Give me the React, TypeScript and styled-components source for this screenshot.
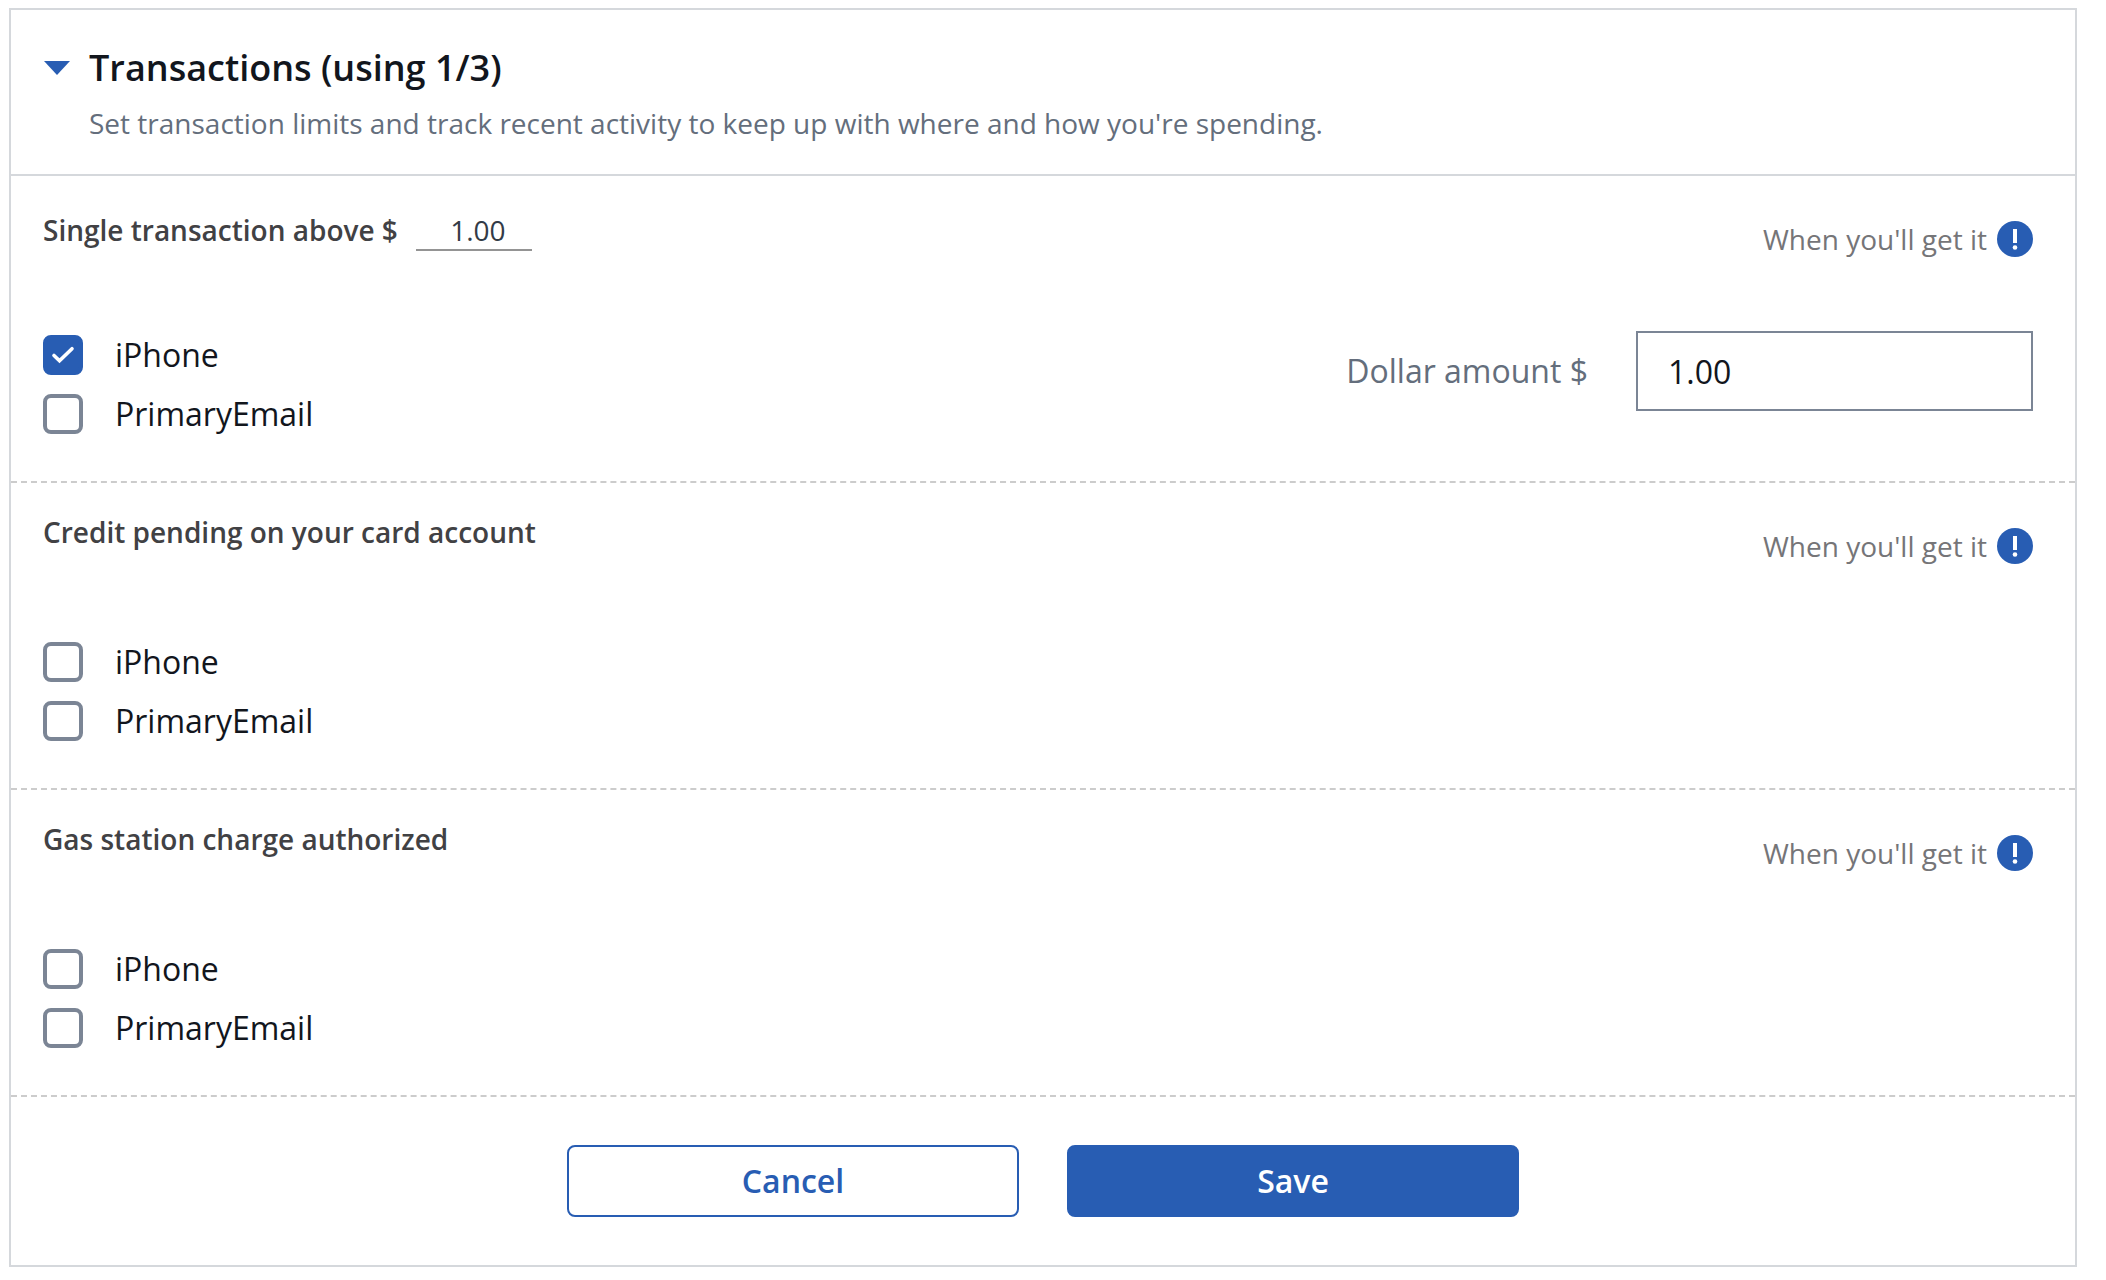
import React, { useId, useState } from "react";
import styled, { createGlobalStyle } from "styled-components";

const color = {
  blue: "#285db3",
  ink: "#12161d",
  slate: "#646e7c",
  control: "#7b8595",
  charcoal: "#414144",
  grey: "#757578",
  line: "#d5d8dc",
  dash: "#cccccc",
};

const GlobalStyle = createGlobalStyle`
  *, *::before, *::after { box-sizing: border-box; }
  body {
    margin: 0;
    background: #fff;
    color: ${color.ink};
    font-family: "Open Sans", "Noto Sans", sans-serif;
    font-size: 28px;
    line-height: 38px;
  }
  button, input { font: inherit; color: inherit; }
`;

const Panel = styled.form`
  margin: 8px 29px 13px 9px;
  border: 2px solid ${color.line};
  background: #fff;
`;

const PanelHeader = styled.header`
  padding: 34px 42px 32px 32px;
  border-bottom: 2px solid ${color.line};
`;

const Title = styled.h2`
  margin: 0 0 12px;
  font-size: 36px;
  line-height: 48px;
  font-weight: 600;
`;

const Toggle = styled.button`
  display: flex;
  align-items: center;
  gap: 18px;
  padding: 0;
  border: 0;
  background: none;
  cursor: pointer;
`;

const Caret = styled.svg<{ $open: boolean }>`
  width: 28px;
  height: 14px;
  fill: ${color.blue};
  transform: rotate(${(p) => (p.$open ? 0 : -90)}deg);
`;

const Description = styled.p`
  margin: 0;
  padding-left: 46px;
  color: ${color.slate};
`;

const Section = styled.section`
  padding: 30px 42px 47px 32px;
  border-bottom: 2px dashed ${color.dash};
`;

const SectionHead = styled.div`
  display: flex;
  align-items: flex-start;
  justify-content: space-between;
  margin-bottom: 74px;
`;

const Heading = styled.div`
  display: flex;
  align-items: baseline;
  gap: 18px;
`;

const SectionTitle = styled.h3`
  margin: 0;
  color: ${color.charcoal};
  font-size: 28px;
  font-weight: 600;
`;

const InlineAmount = styled.input`
  width: 116px;
  height: 45px;
  padding: 5px 0 0 8px;
  border: 0;
  border-bottom: 2px solid #949494;
  border-radius: 0;
  background: none;
  color: #333b47;
  text-align: center;
  outline: none;
`;

const Help = styled.button`
  display: flex;
  align-items: center;
  gap: 10px;
  margin-top: 15px;
  padding: 0;
  border: 0;
  background: none;
  color: ${color.grey};
  line-height: 36px;
  cursor: pointer;
`;

const HelpIcon = styled.svg`
  width: 36px;
  height: 36px;
`;

const SectionBody = styled.div`
  display: flex;
  align-items: flex-start;
  justify-content: space-between;
`;

const Options = styled.div`
  display: flex;
  flex-direction: column;
  gap: 19px;
  padding-top: 4px;
`;

const Option = styled.label`
  display: flex;
  align-items: center;
  gap: 32px;
  font-size: 32px;
  line-height: 40px;
  cursor: pointer;
`;

const CheckWrap = styled.span`
  display: grid;
  width: 40px;
  height: 40px;
  > * { grid-area: 1 / 1; }
`;

const Checkbox = styled.input`
  appearance: none;
  width: 40px;
  height: 40px;
  margin: 0;
  border: 4px solid ${color.control};
  border-radius: 8px;
  background: #fff;
  cursor: pointer;
  &:checked {
    border-color: ${color.blue};
    background: ${color.blue};
  }
`;

const Tick = styled.svg`
  width: 40px;
  height: 40px;
  z-index: 1;
  pointer-events: none;
`;

const AmountField = styled.div`
  display: flex;
  align-items: center;
  gap: 48px;
  font-size: 32px;
  line-height: 44px;
`;

const AmountLabel = styled.label`
  color: ${color.slate};
`;

const AmountInput = styled.input`
  width: 397px;
  height: 80px;
  padding: 0 30px;
  border: 2px solid ${color.control};
  border-radius: 0;
  background: #fff;
`;

const Actions = styled.footer`
  display: flex;
  justify-content: center;
  gap: 48px;
  padding: 48px 32px;
`;

const ActionButton = styled.button<{ $primary?: boolean }>`
  flex: 0 1 452px;
  height: 72px;
  padding: 0;
  border: 2px solid ${color.blue};
  border-radius: 8px;
  background: ${(p) => (p.$primary ? color.blue : "#fff")};
  color: ${(p) => (p.$primary ? "#fff" : color.blue)};
  font-size: 32px;
  font-weight: 600;
  cursor: pointer;
`;

const WhenHelp = () => (
  <Help type="button">
    When you'll get it
    <HelpIcon viewBox="0 0 36 36" aria-hidden="true">
      <circle cx="18" cy="18" r="18" fill={color.blue} />
      <path d="M16 8h4v14h-4z" fill="#fff" />
      <circle cx="18" cy="26.5" r="2.3" fill="#fff" />
    </HelpIcon>
  </Help>
);

const Channel = ({ name, initial = false }: { name: string; initial?: boolean }) => {
  const [checked, setChecked] = useState(initial);
  return (
    <Option>
      <CheckWrap>
        <Checkbox
          type="checkbox"
          checked={checked}
          onChange={(e) => setChecked(e.target.checked)}
        />
        {checked && (
          <Tick viewBox="0 0 40 40" fill="none" aria-hidden="true">
            <path
              d="M11 20.5l5.5 5.3L29 13.7"
              stroke="#fff"
              strokeWidth="3.6"
              strokeLinecap="round"
            />
          </Tick>
        )}
      </CheckWrap>
      {name}
    </Option>
  );
};

interface AlertProps {
  title: string;
  amount?: string;
  onAmount?: (value: string) => void;
  phone?: boolean;
}

const Alert = ({ title, amount, onAmount, phone }: AlertProps) => {
  const id = useId();
  const hasAmount = amount !== undefined;
  return (
    <Section>
      <SectionHead>
        <Heading>
          <SectionTitle id={`${id}-title`}>{title}</SectionTitle>
          {hasAmount && (
            <InlineAmount
              type="text"
              aria-labelledby={`${id}-title`}
              value={amount}
              onChange={(e) => onAmount?.(e.target.value)}
            />
          )}
        </Heading>
        <WhenHelp />
      </SectionHead>
      <SectionBody>
        <Options>
          <Channel name="iPhone" initial={phone} />
          <Channel name="PrimaryEmail" />
        </Options>
        {hasAmount && (
          <AmountField>
            <AmountLabel htmlFor={`${id}-amount`}>Dollar amount $</AmountLabel>
            <AmountInput
              id={`${id}-amount`}
              type="text"
              value={amount}
              onChange={(e) => onAmount?.(e.target.value)}
            />
          </AmountField>
        )}
      </SectionBody>
    </Section>
  );
};

export default function App() {
  const [open, setOpen] = useState(true);
  const [amount, setAmount] = useState("1.00");
  return (
    <>
      <GlobalStyle />
      <Panel onSubmit={(e) => e.preventDefault()}>
        <PanelHeader>
          <Title>
            <Toggle type="button" aria-expanded={open} onClick={() => setOpen(!open)}>
              <Caret $open={open} viewBox="0 0 28 14" aria-hidden="true">
                <path d="M1 0h26L14 14z" />
              </Caret>
              Transactions (using 1/3)
            </Toggle>
          </Title>
          <Description>
            Set transaction limits and track recent activity to keep up with where and how
            you're spending.
          </Description>
        </PanelHeader>
        {open && (
          <>
            <Alert
              title="Single transaction above $"
              amount={amount}
              onAmount={setAmount}
              phone
            />
            <Alert title="Credit pending on your card account" />
            <Alert title="Gas station charge authorized" />
            <Actions>
              <ActionButton type="button">Cancel</ActionButton>
              <ActionButton type="submit" $primary>
                Save
              </ActionButton>
            </Actions>
          </>
        )}
      </Panel>
    </>
  );
}
